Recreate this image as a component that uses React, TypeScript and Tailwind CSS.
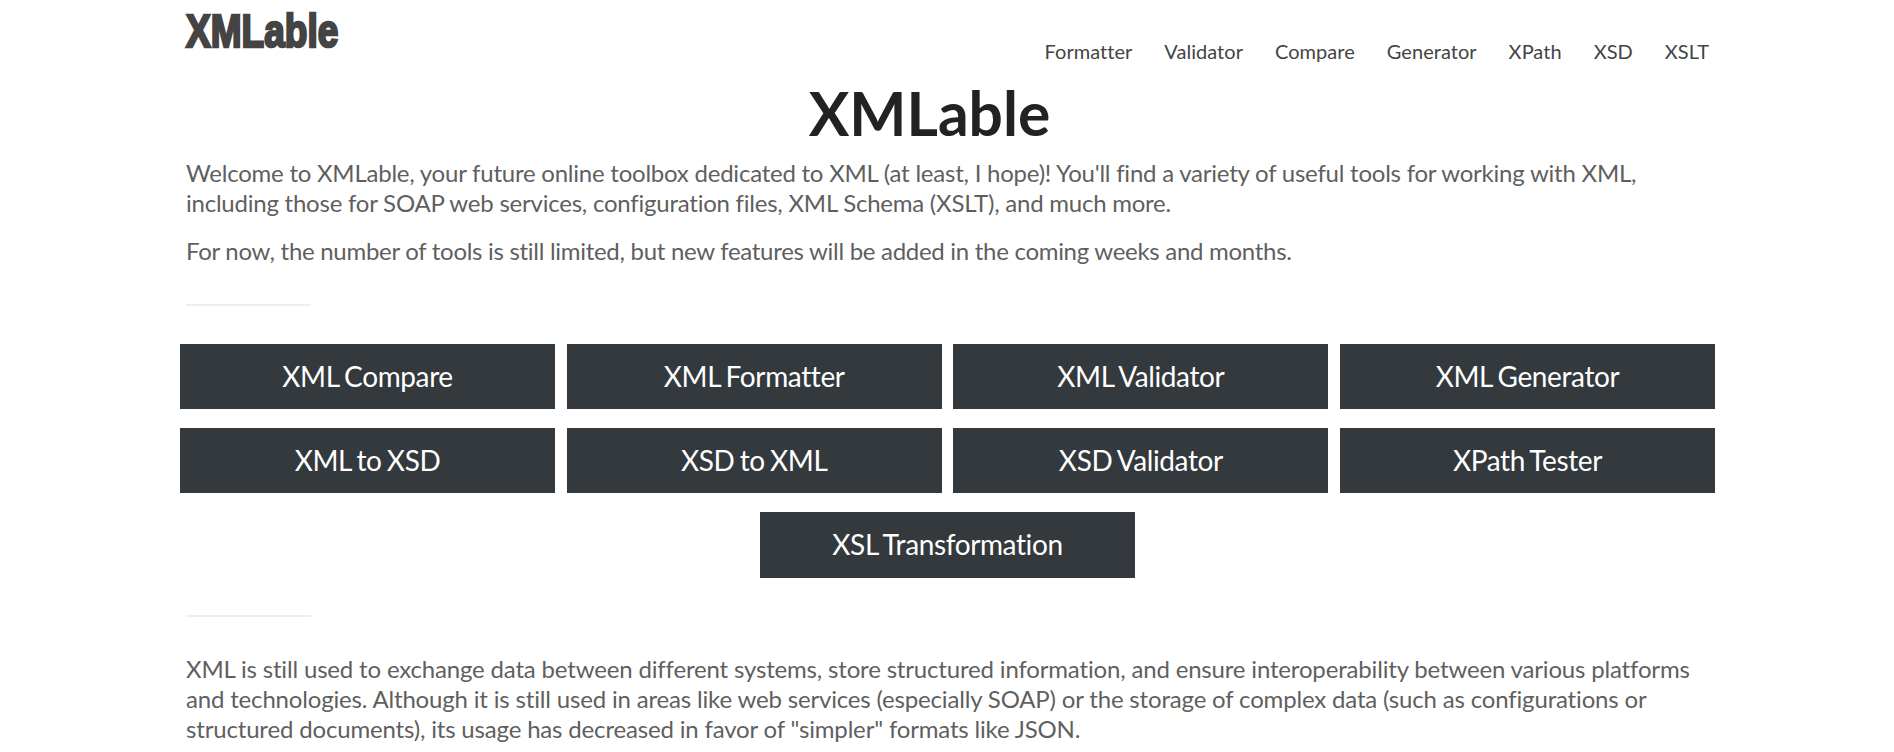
export default function App() {
  const nav = ["Formatter", "Validator", "Compare", "Generator", "XPath", "XSD", "XSLT"];
  const tools = ["XML Compare", "XML Formatter", "XML Validator", "XML Generator", "XML to XSD", "XSD to XML", "XSD Validator", "XPath Tester", "XSL Transformation"];
  return (
    <div className="h-[752px] overflow-hidden bg-white font-['Lato',sans-serif] text-[24px] leading-[30px] text-[#5f5f5f]">
      <div className="ml-[180px] w-[1535px]">
        <header className="flex h-[70px] items-start justify-between px-[6px]">
          <div className="mt-[5px] origin-left scale-x-[0.805] font-['Liberation_Sans_Narrow','Liberation_Sans',sans-serif] text-[46px] font-bold leading-[52px] text-[#444444] [-webkit-text-stroke:2.5px_#444444]">XMLable</div>
          <nav className="mt-[36px] flex gap-[32px] text-[20px] leading-[30px] tracking-[0.04px] text-[#444444]">
            {nav.map((n) => (
              <a key={n}>{n}</a>
            ))}
          </nav>
        </header>
        <h1 className="mt-[10px] pr-[36px] text-center text-[60.5px] font-bold leading-[66px] text-[#222222]">XMLable</h1>
        <div className="mt-[12px] px-[6px]">
          <p className="tracking-[-0.23px]">Welcome to XMLable, your future online toolbox dedicated to XML (at least, I hope)! You'll find a variety of useful tools for working with XML, including those for SOAP web services, configuration files, XML Schema (XSLT), and much more.</p>
          <p className="mt-[18px] tracking-[-0.29px]">For now, the number of tools is still limited, but new features will be added in the coming weeks and months.</p>
          <hr className="mt-[38px] h-[2px] w-[125px] border-0 bg-[#eeeeee]" />
        </div>
        <div className="mt-[37.5px] flex flex-wrap justify-center gap-x-[11.67px] gap-y-[18.75px]">
          {tools.map((t) => (
            <a key={t} className="flex h-[65.5px] w-[375px] items-center justify-center bg-[#33393d] pb-[1px] text-[28px] tracking-[-0.38px] text-white [word-spacing:-1.5px]">{t}</a>
          ))}
        </div>
        <div className="px-[6px]">
          <hr className="mt-[37px] h-[2px] w-[125px] border-0 bg-[#eeeeee]" />
          <p className="mt-[37px] tracking-[-0.17px]">XML is still used to exchange data between different systems, store structured information, and ensure interoperability between various platforms and technologies. Although it is still used in areas like web services (especially SOAP) or the storage of complex data (such as configurations or structured documents), its usage has decreased in favor of "simpler" formats like JSON.</p>
        </div>
      </div>
    </div>
  );
}
